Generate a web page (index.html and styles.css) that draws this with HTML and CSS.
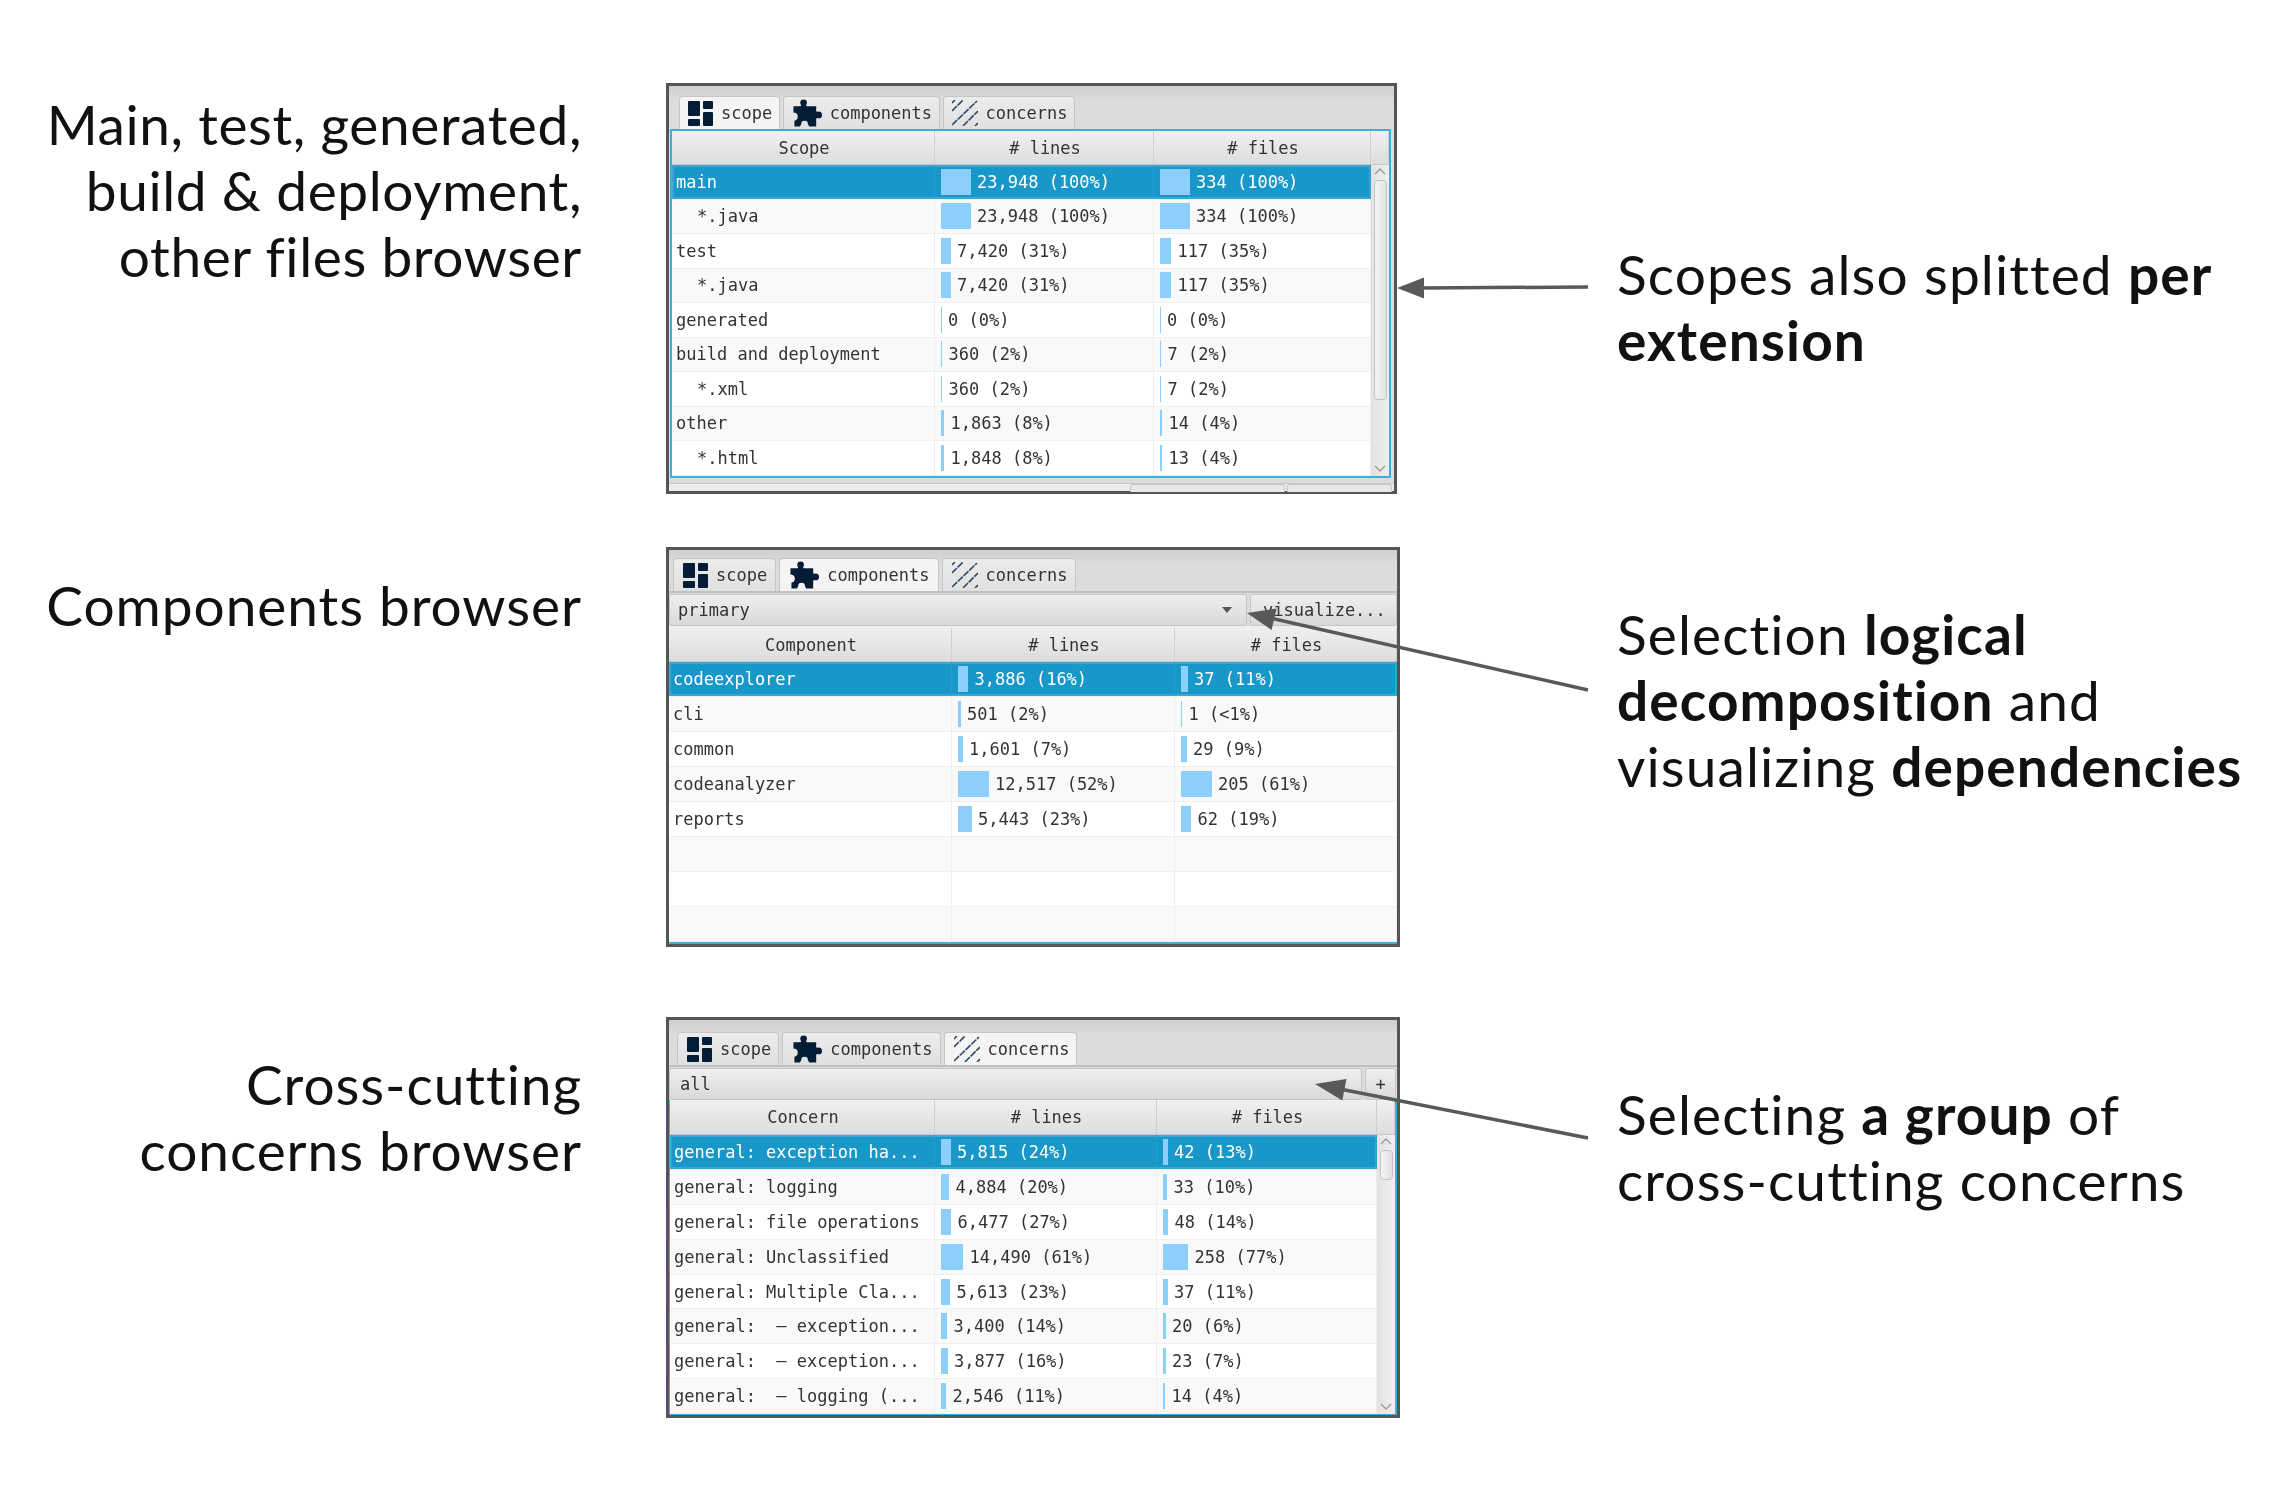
FILE: index.html
```html
<!DOCTYPE html>
<html lang="en">
<head>
    <meta charset="UTF-8">
    <title>Code explorer browsers</title>
    <link rel="stylesheet" href="styles.css">
</head>
<body>
<svg width="0" height="0" class="defs">
    <symbol id="icon-scope" viewBox="0 0 25 25">
        <rect x="0" y="0" width="12" height="15" rx="1"/>
        <rect x="15" y="0" width="10" height="8" rx="1"/>
        <rect x="0" y="18" width="12" height="7" rx="1"/>
        <rect x="15" y="11" width="10" height="14" rx="1"/>
    </symbol>
    <symbol id="icon-puzzle" viewBox="0 0 31 28">
        <path d="M1.500 7H9C10 6 8.500 5 8.500 3.500A3.500 3.500 0 0 1 15.500 3.500C15.500 5 14 6 15 7H25V12C26 13.500 26.500 12.500 27.500 12.500A3.500 3.500 0 0 1 27.500 19.500C26.500 19.500 26 18.500 25 20V28H18C17 27 17.500 26.500 16.500 25.500A3.500 3.500 0 0 0 9.500 25.500C8.500 26.500 9 27 8 28H2.500V22C4.500 21.500 6 20 6 17.500C6 15 4 13.500 1.500 13.500Z"/>
    </symbol>
    <symbol id="icon-hatch" viewBox="0 0 26 26">
        <g fill="none" stroke="#2f4a66" stroke-width="1.6" stroke-dasharray="7 1">
            <path d="M0 11 11 0"/>
            <path d="M0 25 25 1"/>
            <path d="M11 26 26 11"/>
        </g>
        <path d="M0 3 3 0M23 26 26 23" fill="none" stroke="#2f4a66" stroke-width="1.6"/>
    </symbol>
    <symbol id="chev-up" viewBox="0 0 12 7">
        <path d="M1 6 6 1l5 5" fill="none" stroke="#999" stroke-width="1.3"/>
    </symbol>
    <symbol id="chev-down" viewBox="0 0 12 7">
        <path d="M1 1l5 5 5-5" fill="none" stroke="#999" stroke-width="1.3"/>
    </symbol>
</svg>

<div class="page">

    <section class="band band-scope">
        <h2 class="caption caption-left">Main, test, generated,<br>build &amp; deployment,<br>other files browser</h2>
        <div class="window window-scope">
            <div class="tabs">
                <div class="tab tab-active"><svg class="icon icon-s"><use href="#icon-scope"/></svg>scope</div>
                <div class="tab"><svg class="icon icon-p"><use href="#icon-puzzle"/></svg>components</div>
                <div class="tab"><svg class="icon icon-h"><use href="#icon-hatch"/></svg>concerns</div>
            </div>
            <div class="table">
                <div class="thead"><span>Scope</span><span># lines</span><span># files</span><span></span></div>
                <div class="tbody">
                    <div class="rows">
                        <div class="row selected"><span class="cell">main</span><span class="cell num"><i class="bar" style="width:30px"></i>23,948 (100%)</span><span class="cell num"><i class="bar" style="width:30px"></i>334 (100%)</span></div>
                        <div class="row"><span class="cell sub">*.java</span><span class="cell num"><i class="bar" style="width:30px"></i>23,948 (100%)</span><span class="cell num"><i class="bar" style="width:30px"></i>334 (100%)</span></div>
                        <div class="row"><span class="cell">test</span><span class="cell num"><i class="bar" style="width:10px"></i>7,420 (31%)</span><span class="cell num"><i class="bar" style="width:11.5px"></i>117 (35%)</span></div>
                        <div class="row"><span class="cell sub">*.java</span><span class="cell num"><i class="bar" style="width:10px"></i>7,420 (31%)</span><span class="cell num"><i class="bar" style="width:11.5px"></i>117 (35%)</span></div>
                        <div class="row"><span class="cell">generated</span><span class="cell num"><i class="bar" style="width:1px"></i>0 (0%)</span><span class="cell num"><i class="bar" style="width:1px"></i>0 (0%)</span></div>
                        <div class="row"><span class="cell">build and deployment</span><span class="cell num"><i class="bar" style="width:1.5px"></i>360 (2%)</span><span class="cell num"><i class="bar" style="width:1.5px"></i>7 (2%)</span></div>
                        <div class="row"><span class="cell sub">*.xml</span><span class="cell num"><i class="bar" style="width:1.5px"></i>360 (2%)</span><span class="cell num"><i class="bar" style="width:1.5px"></i>7 (2%)</span></div>
                        <div class="row"><span class="cell">other</span><span class="cell num"><i class="bar" style="width:3.5px"></i>1,863 (8%)</span><span class="cell num"><i class="bar" style="width:2.5px"></i>14 (4%)</span></div>
                        <div class="row"><span class="cell sub">*.html</span><span class="cell num"><i class="bar" style="width:3.5px"></i>1,848 (8%)</span><span class="cell num"><i class="bar" style="width:2.5px"></i>13 (4%)</span></div>
                    </div>
                    <div class="scrollbar">
                        <svg class="chev"><use href="#chev-up"/></svg>
                        <div class="thumb"></div>
                        <svg class="chev chev-end"><use href="#chev-down"/></svg>
                    </div>
                </div>
            </div>
            <div class="strip">
                <div class="stub stub-wide"></div>
                <div class="stub stub-narrow"></div>
            </div>
        </div>
        <p class="caption caption-right">Scopes also splitted <b>per<br>extension</b></p>
    </section>

    <section class="band band-components">
        <h2 class="caption caption-left">Components browser</h2>
        <div class="window window-components">
            <div class="tabs">
                <div class="tab"><svg class="icon icon-s"><use href="#icon-scope"/></svg>scope</div>
                <div class="tab tab-active"><svg class="icon icon-p"><use href="#icon-puzzle"/></svg>components</div>
                <div class="tab"><svg class="icon icon-h"><use href="#icon-hatch"/></svg>concerns</div>
            </div>
            <div class="tools">
                <div class="combo">primary<i class="combo-arrow"></i></div>
                <div class="tool-btn">visualize...</div>
            </div>
            <div class="table">
                <div class="thead"><span>Component</span><span># lines</span><span># files</span></div>
                <div class="tbody">
                    <div class="rows">
                        <div class="row selected"><span class="cell">codeexplorer</span><span class="cell num"><i class="bar" style="width:10.5px"></i>3,886 (16%)</span><span class="cell num"><i class="bar" style="width:7px"></i>37 (11%)</span></div>
                        <div class="row"><span class="cell">cli</span><span class="cell num"><i class="bar" style="width:3px"></i>501 (2%)</span><span class="cell num"><i class="bar" style="width:1.5px"></i>1 (&lt;1%)</span></div>
                        <div class="row"><span class="cell">common</span><span class="cell num"><i class="bar" style="width:5px"></i>1,601 (7%)</span><span class="cell num"><i class="bar" style="width:6px"></i>29 (9%)</span></div>
                        <div class="row"><span class="cell">codeanalyzer</span><span class="cell num"><i class="bar" style="width:31px"></i>12,517 (52%)</span><span class="cell num"><i class="bar" style="width:31px"></i>205 (61%)</span></div>
                        <div class="row"><span class="cell">reports</span><span class="cell num"><i class="bar" style="width:14px"></i>5,443 (23%)</span><span class="cell num"><i class="bar" style="width:10.5px"></i>62 (19%)</span></div>
                        <div class="row"><span class="cell"></span><span class="cell"></span><span class="cell"></span></div>
                        <div class="row"><span class="cell"></span><span class="cell"></span><span class="cell"></span></div>
                        <div class="row"><span class="cell"></span><span class="cell"></span><span class="cell"></span></div>
                    </div>
                </div>
            </div>
        </div>
        <p class="caption caption-right">Selection <b>logical<br>decomposition</b> and<br>visualizing <b>dependencies</b></p>
    </section>

    <section class="band band-concerns">
        <h2 class="caption caption-left">Cross-cutting<br>concerns browser</h2>
        <div class="window window-concerns">
            <div class="tabs">
                <div class="tab"><svg class="icon icon-s"><use href="#icon-scope"/></svg>scope</div>
                <div class="tab"><svg class="icon icon-p"><use href="#icon-puzzle"/></svg>components</div>
                <div class="tab tab-active"><svg class="icon icon-h"><use href="#icon-hatch"/></svg>concerns</div>
            </div>
            <div class="tools">
                <div class="combo">all<i class="combo-arrow"></i></div>
                <div class="tool-btn">+</div>
            </div>
            <div class="table">
                <div class="thead"><span>Concern</span><span># lines</span><span># files</span><span></span></div>
                <div class="tbody">
                    <div class="rows">
                        <div class="row selected"><span class="cell">general: exception ha...</span><span class="cell num"><i class="bar" style="width:10px"></i>5,815 (24%)</span><span class="cell num"><i class="bar" style="width:5px"></i>42 (13%)</span></div>
                        <div class="row"><span class="cell">general: logging</span><span class="cell num"><i class="bar" style="width:8.5px"></i>4,884 (20%)</span><span class="cell num"><i class="bar" style="width:4.5px"></i>33 (10%)</span></div>
                        <div class="row"><span class="cell">general: file operations</span><span class="cell num"><i class="bar" style="width:10.5px"></i>6,477 (27%)</span><span class="cell num"><i class="bar" style="width:5.5px"></i>48 (14%)</span></div>
                        <div class="row"><span class="cell">general: Unclassified</span><span class="cell num"><i class="bar" style="width:22.5px"></i>14,490 (61%)</span><span class="cell num"><i class="bar" style="width:25.5px"></i>258 (77%)</span></div>
                        <div class="row"><span class="cell">general: Multiple Cla...</span><span class="cell num"><i class="bar" style="width:9.5px"></i>5,613 (23%)</span><span class="cell num"><i class="bar" style="width:5px"></i>37 (11%)</span></div>
                        <div class="row"><span class="cell">general:  – exception...</span><span class="cell num"><i class="bar" style="width:6.5px"></i>3,400 (14%)</span><span class="cell num"><i class="bar" style="width:3px"></i>20 (6%)</span></div>
                        <div class="row"><span class="cell">general:  – exception...</span><span class="cell num"><i class="bar" style="width:7px"></i>3,877 (16%)</span><span class="cell num"><i class="bar" style="width:3px"></i>23 (7%)</span></div>
                        <div class="row"><span class="cell">general:  – logging (...</span><span class="cell num"><i class="bar" style="width:5.5px"></i>2,546 (11%)</span><span class="cell num"><i class="bar" style="width:2.5px"></i>14 (4%)</span></div>
                    </div>
                    <div class="scrollbar">
                        <svg class="chev"><use href="#chev-up"/></svg>
                        <div class="thumb"></div>
                        <svg class="chev chev-end"><use href="#chev-down"/></svg>
                    </div>
                </div>
            </div>
        </div>
        <p class="caption caption-right">Selecting <b>a group</b> of<br>cross-cutting concerns</p>
    </section>

    <!-- arrows from the notes to the windows -->
    <svg class="arrows" viewBox="0 0 2278 1502">
        <g class="arrow">
            <line x1="1588" y1="287" x2="1420" y2="288"/>
            <polygon points="1397,288 1424,277.5 1424,298.5"/>
        </g>
        <g class="arrow">
            <line x1="1588" y1="690" x2="1270" y2="618"/>
            <polygon points="1247,613 1276.6,608.5 1271.6,629.9"/>
        </g>
        <g class="arrow">
            <line x1="1588" y1="1138" x2="1340" y2="1089"/>
            <polygon points="1315,1084 1346.5,1079 1342.3,1100.6"/>
        </g>
    </svg>
</div>
</body>
</html>
```

FILE: styles.css
```css
html, body {
    margin: 0;
    padding: 0;
    background-color: white;
}

.defs {
    position: absolute;
}

.page {
    position: relative;
    width: 2278px;
    height: 1502px;
    overflow: hidden;
    padding-top: 83px;
    box-sizing: border-box;
    display: flex;
    flex-direction: column;
}

/* one band = left note, window, right note */
.band {
    display: flex;
    align-items: flex-start;
}

.band-components {
    margin-top: 53px;
}

.band-concerns {
    margin-top: 70px;
}

.caption {
    margin: 0;
    font-family: Lato, "Open Sans", sans-serif;
    font-size: 55px;
    font-weight: 400;
    line-height: 66px;
    letter-spacing: 1.1px;
    color: #111;
    white-space: nowrap;
}

.caption b {
    font-weight: 700;
}

.caption-left {
    width: 582px;
    margin-right: 84px;
    text-align: right;
    letter-spacing: 0.95px;
    flex-shrink: 0;
}

.caption-right {
    margin-left: 217px;
}

.band-scope .caption-left { padding-top: 8px; letter-spacing: 0.6px; }
.band-components .caption-left { padding-top: 25px; }
.band-concerns .caption-left { padding-top: 34px; }

.band-scope .caption-right { padding-top: 158px; margin-left: 220px; }
.band-components .caption-right { padding-top: 54px; }
.band-concerns .caption-right { padding-top: 64px; }

/* the screenshots of the app */
.window {
    box-sizing: border-box;
    border: 3px solid #555;
    background: linear-gradient(#cfcfcf, #dcdcdc 14px);
    font-family: "DejaVu Sans Mono", "Liberation Mono", monospace;
    font-size: 17px;
    color: #333;
    filter: blur(0.4px);
    flex-shrink: 0;
}

.window-scope {
    width: 731px;
    height: 411px;
    --cols: 263px 219px 217px;
    --head: 263px 219px 217px 1fr;
    --row: 34.5px;
}

.window-components {
    width: 734px;
    height: 400px;
    --cols: 283px 223px 222px;
    --head: 283px 223px 222px;
    --row: 35px;
}

.window-concerns {
    width: 734px;
    height: 401px;
    --cols: 265px 222px 220px;
    --head: 265px 222px 220px 1fr;
    --row: 34.9px;
}

.tabs {
    display: flex;
    align-items: flex-end;
    gap: 2.5px;
    height: 43px;
    padding-left: 10px;
    box-sizing: border-box;
}

.window-components .tabs {
    height: 43px;
    padding-left: 4px;
    border-bottom: 2px solid #c0c0c0;
    gap: 3px;
}

.window-concerns .tabs {
    height: 47px;
    padding-left: 8px;
    gap: 3px;
    border-bottom: 2px solid #c0c0c0;
}

.tab {
    height: 33px;
    display: flex;
    align-items: center;
    padding: 0 8px 0 9px;
    box-sizing: border-box;
    border: 1px solid #c6c6c6;
    border-bottom: none;
    border-radius: 4px 4px 0 0;
    background: linear-gradient(#ececec, #e0e0e0);
}

.window-scope .tab {
    padding: 0 7px 0 8px;
}

.window-concerns .tab {
    padding: 0 7px 0 9px;
}

.tab-active {
    background: #f4f4f4;
}

.icon {
    margin-right: 8px;
    fill: #051c36;
    flex-shrink: 0;
}

.icon-s { width: 25px; height: 25px; }
.icon-p { width: 30px; height: 28px; }
.icon-h { width: 26px; height: 26px; }

/* combo box row above the table */
.tools {
    display: flex;
    gap: 3px;
    height: 33px;
    padding-top: 1px;
    box-sizing: border-box;
}

.combo, .tool-btn {
    display: flex;
    align-items: center;
    box-sizing: border-box;
    border: 1px solid #c6c6c6;
    border-radius: 3px;
    background: linear-gradient(#efefef, #d9d9d9);
}

.combo {
    flex: 1;
    padding: 0 8px;
}

.window-concerns .combo {
    padding: 0 10px;
}

.combo-arrow {
    width: 0;
    height: 0;
    margin-left: auto;
    margin-right: 6px;
    border-left: 5px solid transparent;
    border-right: 5px solid transparent;
    border-top: 6px solid #555;
}

.tool-btn {
    padding: 0 12px;
    width: 147px;
}

.window-concerns .tool-btn {
    width: 31px;
    padding: 0;
    justify-content: center;
    margin-right: 1px;
}

.table {
    display: flex;
    flex-direction: column;
}

.window-scope .table {
    width: 721px;
    box-sizing: border-box;
    margin-left: 1px;
    border: 2px solid #3bb0da;
}

.window-components .table {
    border-bottom: 2px solid #3bb0da;
}

.window-concerns .table {
    border: 2px solid #3bb0da;
    border-width: 0 2px 1px 1px;
}

.thead {
    display: grid;
    grid-template-columns: var(--head);
    height: 34px;
    flex-shrink: 0;
    background: linear-gradient(#f0f0f0, #dddddd);
    border-bottom: 1px solid #c8c8c8;
}

.window-scope .thead {
    height: 33px;
}

.window-components .thead {
    height: 33px;
    padding-top: 2px;
}

.thead span {
    display: flex;
    align-items: center;
    justify-content: center;
    padding-left: 2px;
    border-right: 1px solid #cfcfcf;
}

.tbody {
    display: flex;
}

.rows {
    display: flex;
    flex-direction: column;
}

.row {
    display: grid;
    grid-template-columns: var(--cols);
    height: var(--row);
    box-sizing: border-box;
    border-bottom: 1px solid #f0f0f0;
    background-color: white;
}

.row:nth-child(even) {
    background-color: #f9f9f9;
}

.row.selected {
    background-color: #1897c9;
    color: white;
    box-shadow: inset 0 0 0 2px #3aa5d6;
}

.cell {
    display: flex;
    align-items: center;
    padding-left: 4px;
    box-sizing: border-box;
    border-right: 1px solid #eeeeee;
    overflow: hidden;
    white-space: pre;
}

.cell.num {
    padding-left: 5.5px;
}

.row.selected .cell {
    border-right-color: #2a9fd0;
}

.cell.sub {
    padding-left: 25px;
}

.bar {
    height: 26px;
    margin-right: 6.5px;
    background-color: #8bcffa;
    flex-shrink: 0;
}

.scrollbar {
    flex: 1;
    display: flex;
    flex-direction: column;
    align-items: center;
    background: linear-gradient(to right, #e2e2e2, #efefef);
    padding-top: 3px;
    box-sizing: border-box;
}

.chev {
    width: 12px;
    height: 7px;
    flex-shrink: 0;
}

.chev-end {
    margin-top: auto;
    margin-bottom: 4px;
}

.thumb {
    width: 13px;
    margin-top: 5px;
    box-sizing: border-box;
    border: 1px solid #c4c4c4;
    border-radius: 4px;
    background: linear-gradient(to right, #f4f4f4, #e2e2e2);
}

.window-scope .thumb { height: 220px; }
.window-concerns .thumb { height: 30px; }

/* bottom edge of the first window, cut off in the picture */
.strip {
    height: 8.5px;
    margin-top: 5px;
    box-sizing: border-box;
    border-top: 1px solid #c8c8c8;
    background-color: #ececec;
    display: flex;
    justify-content: flex-end;
    gap: 2px;
    padding-right: 2px;
}

.stub {
    height: 8px;
    box-sizing: border-box;
    border: 1px solid #c6c6c6;
    border-bottom: none;
    border-radius: 3px 3px 0 0;
    background-color: #e8e8e8;
}

.stub-wide { width: 155px; }
.stub-narrow { width: 105px; }

.arrows {
    position: absolute;
    left: 0;
    top: 0;
    width: 2278px;
    height: 1502px;
}

.arrow line {
    stroke: #595959;
    stroke-width: 3.5;
}

.arrow polygon {
    fill: #595959;
}
```
